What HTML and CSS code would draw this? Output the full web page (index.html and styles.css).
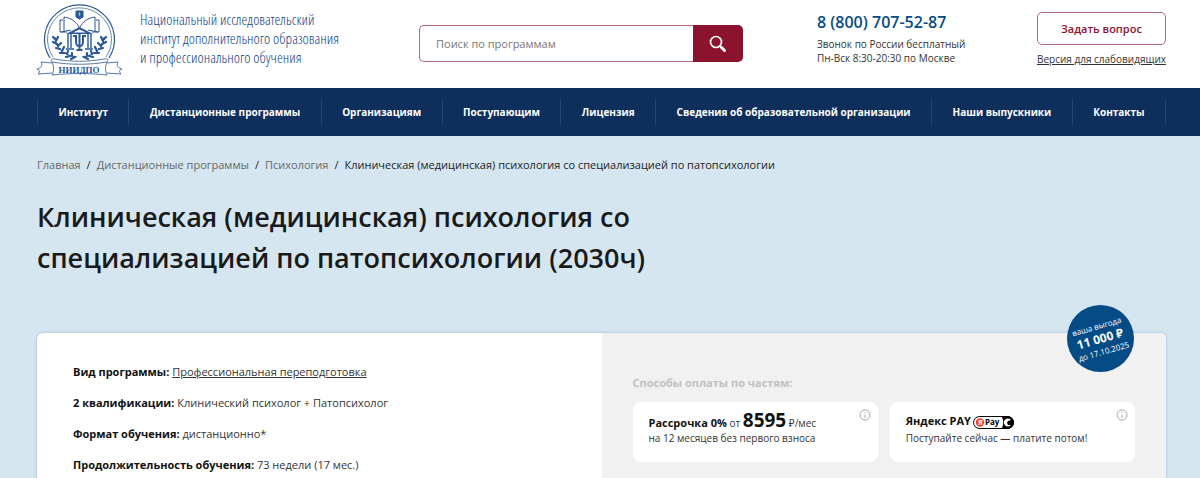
FILE: index.html
```html
<!DOCTYPE html>
<html lang="ru">
<head>
    <meta charset="UTF-8">
    <meta name="viewport" content="width=device-width, initial-scale=1">
    <title>Клиническая (медицинская) психология — НИИДПО</title>
    <link rel="stylesheet" href="styles.css">
</head>
<body>
    <header class="header container">
        <a href="#" class="logo">
            <svg class="logo-img" viewBox="0 0 85 73" fill="none" stroke="#2a5796" aria-label="НИИДПО">
                <path d="M13 55a35 34.500 0 1 1 59 0" stroke-width="1.200"/>
                <path d="M16 54a32 31.500 0 1 1 53 0" stroke-width=".7"/>
                <!-- book -->
                <path d="M30 29h-7V17h3M55 29h7V17h-3" stroke-width="1"/>
                <path d="M27 28V14c7 1 12 4 15.500 11C46 18 51 15 58 14v14" stroke-width="1"/>
                <path d="M24 29l10-2M61 29l-10-2" stroke-width="1"/>
                <path d="M39 8h7v6l-3.500 2-3.500-2z" fill="#2a5796"/>
                <path d="M41 11h3M42.500 9v4" stroke="#b9cbe2" stroke-width=".7"/>
                <!-- temple -->
                <path d="M29 31l13.500-7L56 31z" fill="#2a5796" stroke="none"/>
                <path d="M36 29.500l6.500-3 6.500 3z" fill="#fff" stroke="none"/>
                <path d="M31 31v14M34 31v14M51 31v14M54 31v14M29 46h8M48 46h8" stroke-width="1.400"/>
                <path d="M36 33h3v5c0 4 1 5 3.500 5s3.500-1 3.500-5v-5h3M42.500 31v16M39.500 47h6" stroke-width="2"/>
                <!-- laurel -->
                <path d="M18 34c0 11 8 18 22 20M67 34c0 11-8 18-22 20" stroke-width="1"/>
                <path d="M18 36l-2-2M19 38l2-4M20 41l-4-2M21 43l3-3M23 46l-4-1M25 48l2-4M28 50l-5 0M30 51l1-3M33 53l-4 1M35 53l0-3M38 54l-4 2M67 36l2-2M66 38l-2-4M65 41l4-2M64 43l-3-3M62 46l4-1M60 48l-2-4M57 50l5 0M55 51l-1-3M52 53l4 1M50 53l0-3M47 54l4 2" stroke-width="2.200" stroke-linecap="round"/>
                <!-- ribbon -->
                <path d="M15 60L4 59c2 4 0 6-4 7 3 1 3 3 1 5l14-1M70 60l11-1c-2 4 0 6 4 7-3 1-3 3-1 5l-14-1" fill="#fff" stroke-width=".8"/>
                <path d="M15 59c-2-2 0-4 3-3 16 3 33 3 49 0 3-1 5 1 3 3M15 59c2 4 2 9 0 13 18-2 37-2 55 0-2-4-2-9 0-13-18 3-37 3-55 0z" fill="#fff" stroke-width=".8"/>
                <text x="42" y="70" class="logo-abbr">НИИДПО</text>
            </svg>
            <span class="logo-text">Национальный исследовательский<br>институт дополнительного образования<br>и профессионального обучения</span>
        </a>
        <form class="search">
            <input type="search" class="search-input" placeholder="Поиск по программам" aria-label="Поиск по программам">
            <button type="submit" class="search-btn" aria-label="Найти">
                <svg viewBox="0 0 18 18" width="18" height="18" fill="none" stroke="#fff" stroke-linecap="round">
                    <circle cx="7" cy="7" r="5.500" stroke-width="1.700"/>
                    <path d="M11 11l1.500 1.500" stroke-width="2"/>
                    <path d="M12.500 12.500l3 3" stroke-width="3"/>
                </svg>
            </button>
        </form>
        <div class="phone">
            <a href="tel:88007075287" class="phone-number">8 (800) 707-52-87</a>
            <p>Звонок по России бесплатный<br>Пн-Вск 8:30-20:30 по Москве</p>
        </div>
        <div class="actions">
            <button type="button" class="ask-btn">Задать вопрос</button>
            <a href="#" class="vision-link">Версия для слабовидящих</a>
        </div>
    </header>

    <nav class="nav">
        <ul class="nav-list container">
            <li><a href="#">Институт</a></li>
            <li><a href="#">Дистанционные программы</a></li>
            <li><a href="#">Организациям</a></li>
            <li><a href="#">Поступающим</a></li>
            <li><a href="#">Лицензия</a></li>
            <li><a href="#">Сведения об образовательной организации</a></li>
            <li><a href="#">Наши выпускники</a></li>
            <li><a href="#">Контакты</a></li>
        </ul>
    </nav>

    <main class="container">
        <ul class="breadcrumbs">
            <li><a href="#">Главная</a></li>
            <li><a href="#">Дистанционные программы</a></li>
            <li><a href="#">Психология</a></li>
            <li>Клиническая (медицинская) психология со специализацией по патопсихологии</li>
        </ul>
        <h1>Клиническая (медицинская) психология со специализацией по патопсихологии (2030ч)</h1>

        <section class="program">
            <div class="program-info">
                <p><b>Вид программы:</b> <a href="#">Профессиональная переподготовка</a></p>
                <p><b>2 квалификации:</b> Клинический психолог + Патопсихолог</p>
                <p><b>Формат обучения:</b> дистанционно*</p>
                <p><b>Продолжительность обучения:</b> 73 недели (17 мес.)</p>
            </div>
            <div class="program-pay">
                <h2>Способы оплаты по частям:</h2>
                <div class="pay-list">
                    <div class="pay-card">
                        <p class="pay-title"><b>Рассрочка 0%</b> от <strong class="price">8595</strong> ₽/мес</p>
                        <p>на 12 месяцев без первого взноса</p>
                        <svg class="info" viewBox="0 0 12 12" fill="none" stroke="#aaa"><circle cx="6" cy="6" r="5"/><path d="M6 5.500V9M6 3v1"/></svg>
                    </div>
                    <div class="pay-card">
                        <p class="pay-title"><b>Яндекс PAY</b>
                            <svg class="ya-pay" viewBox="0 0 41 13" width="41" height="13">
                                <rect x=".5" y=".5" width="40" height="12" rx="6" fill="#fff" stroke="#000"/>
                                <path d="M28 0h6.500a6.500 6.500 0 0 1 0 13H28c3-3 3-10 0-13z" fill="#000"/>
                                <circle cx="7" cy="6.500" r="4.200" fill="#fc3f1d"/>
                                <text x="5" y="9" class="ya-letter">Я</text>
                                <text x="12" y="9" class="ya-text">Pay</text>
                                <path d="M38 4a4 4 0 1 0 0 5h-3l-1-2 1-2z" fill="#fff"/>
                            </svg>
                        </p>
                        <p>Поступайте сейчас — платите потом!</p>
                        <svg class="info" viewBox="0 0 12 12" fill="none" stroke="#aaa"><circle cx="6" cy="6" r="5"/><path d="M6 5.500V9M6 3v1"/></svg>
                    </div>
                </div>
            </div>
            <div class="benefit">
                <div class="benefit-text">ваша выгода<b>11 000 ₽</b>до 17.10.2025</div>
            </div>
        </section>
    </main>
</body>
</html>
```
FILE: styles.css
```css
* { box-sizing: border-box; }
body { margin: 0; background: #d6e6f0; color: #333; font-family: "Open Sans", "Noto Sans", sans-serif; font-size: 11px; line-height: 16px; }
p, h1, h2, ul { margin: 0; padding: 0; }
ul { list-style: none; }
a { color: inherit; text-decoration: none; }
button { font-family: inherit; cursor: pointer; }
.container { padding-left: 37px; padding-right: 34px; }

/* header */
.header { display: flex; align-items: flex-start; height: 88px; background: #fff; }
.logo { display: flex; gap: 18px; width: 382px; padding-top: 3px; color: #0f4387; }
.logo-img { width: 85px; height: 73px; flex: none; }
.logo-abbr { font: bold 9px "Liberation Serif", serif; fill: #2a5796; stroke: none; text-anchor: middle; }
.logo-text { padding-top: 7px; font: 15px/19px "Open Sans Condensed Light", "Open Sans Condensed", sans-serif; white-space: nowrap; }
.search { display: flex; flex: 1; margin: 25px 74px 0 0; height: 37px; }
.search-input { flex: 1; min-width: 0; border: 1px solid #b5677a; border-right: 0; border-radius: 5px 0 0 5px; padding: 0 16px; font: 11px "Open Sans", sans-serif; outline: none; }
.search-input::placeholder { color: #777; }
.search-btn { display: flex; align-items: center; justify-content: center; width: 50px; border: 0; border-radius: 0 5px 5px 0; background: #8c132e; }
.phone { width: 220px; padding-top: 12px; font-size: 10px; line-height: 14px; }
.phone-number { display: block; margin-bottom: 5px; color: #054c87; font-size: 16px; font-weight: 600; line-height: 20px; }
.actions { display: flex; flex-direction: column; align-items: flex-end; padding-top: 12px; }
.ask-btn { width: 129px; height: 33px; border: 1px solid #b5677a; border-radius: 5px; background: #fff; color: #8c132e; font-size: 11px; font-weight: 600; }
.vision-link { margin-top: 6px; font-size: 10px; text-decoration: underline; }

/* main menu */
.nav { background: #0e2e5b; padding: 11px 0; }
.nav-list { display: flex; }
.nav-list li { flex: auto; border-right: 1px solid #284672; text-align: center; }
.nav-list li:first-child { border-left: 1px solid #284672; }
.nav-list a { color: #fff; font-size: 10px; font-weight: 700; line-height: 26px; white-space: nowrap; }

.breadcrumbs { display: flex; padding-top: 21px; color: #222; }
.breadcrumbs a { color: #666; }
.breadcrumbs li + li::before { content: "/"; margin: 0 6px; color: #222; }
h1 { max-width: 680px; margin-top: 23px; color: #1a1a1a; font-size: 27px; font-weight: 600; line-height: 41px; }

/* program card */
.program { position: relative; display: flex; margin-top: 55px; border-radius: 6px; background: #fff; box-shadow: 0 0 3px #9db8c9; }
.program-info { width: 50%; padding: 23px 36px; line-height: 31px; }
.program-info b { color: #111; }
.program-info a { text-decoration: underline; }
.program-pay { width: 50%; padding: 42px 31px 32px; border-radius: 0 6px 6px 0; background: #f1f1f1; }
h2 { color: #c1c1c1; font-size: 11px; line-height: 16px; }
.pay-list { display: flex; gap: 12px; margin-top: 11px; }
.pay-card { position: relative; flex: 1; height: 60px; padding: 9px 16px; border-radius: 8px; background: #fff; font-size: 10px; line-height: 14px; white-space: nowrap; }
.pay-title { height: 20px; line-height: 20px; }
.pay-title b { color: #111; font-size: 11px; }
.pay-title .price { color: #111; font-size: 19px; line-height: 18px; }
.info { position: absolute; top: 7px; right: 7px; width: 12px; height: 12px; }
.ya-pay { vertical-align: -4px; }
.ya-letter { font: bold 7px "Open Sans", sans-serif; fill: #fff; }
.ya-text { font: bold 8px "Open Sans", sans-serif; }
.benefit { position: absolute; top: -28px; right: 32px; display: flex; align-items: center; justify-content: center; width: 67px; height: 67px; border-radius: 50%; background: #054c87; color: #fff; }
.benefit-text { transform: rotate(-16deg); font-size: 8px; line-height: 12px; text-align: center; white-space: nowrap; }
.benefit b { display: block; font-size: 12px; line-height: 14px; }
```
